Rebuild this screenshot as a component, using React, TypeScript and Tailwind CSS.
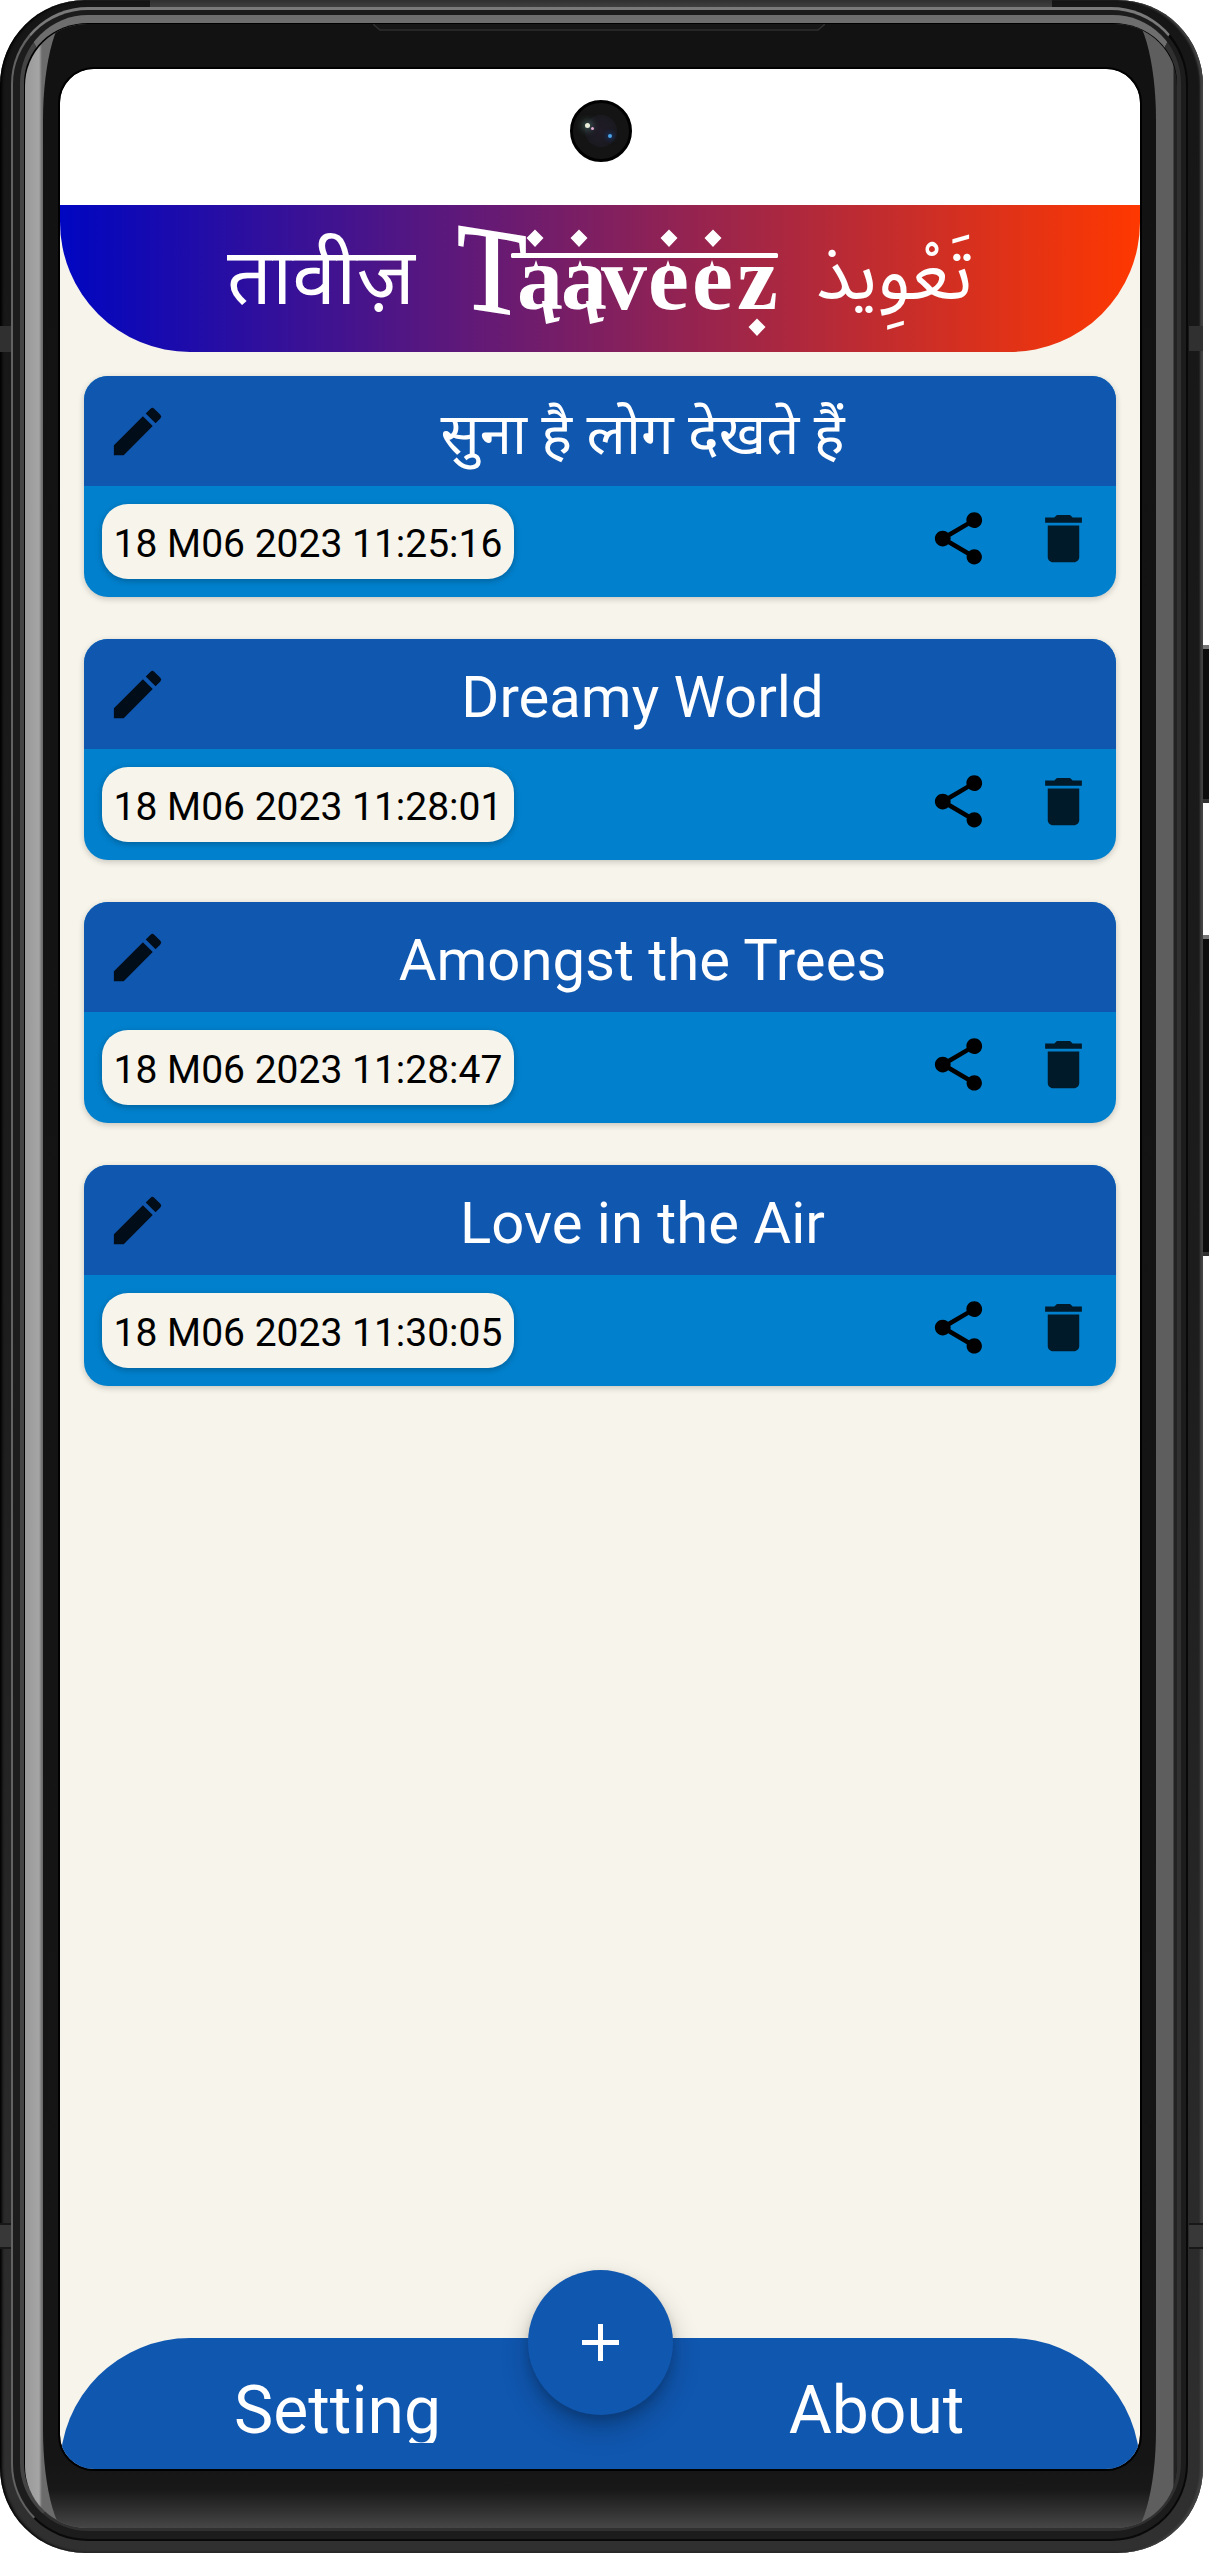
import { MdDelete, MdEdit, MdShare } from "react-icons/md";

const notes = [
  { title: "सुना है लोग देखते हैं", date: "18 M06 2023 11:25:16" },
  { title: "Dreamy World", date: "18 M06 2023 11:28:01" },
  { title: "Amongst the Trees", date: "18 M06 2023 11:28:47" },
  { title: "Love in the Air", date: "18 M06 2023 11:30:05" },
];

function Wordmark() {
  return (
    <svg width="324" height="120" viewBox="456 222 324 120" fill="#fff" className="shrink-0 overflow-visible" fontFamily='"Liberation Serif", serif'>
      <text transform="translate(457 309) skewY(9)" x="0" y="0" fontSize="122" textLength="70" lengthAdjust="spacingAndGlyphs" stroke="#fff" strokeWidth="1.5">T</text>
      <text x="517 561 601 648 692 737" y="312" fontSize="92" fontWeight="700">aaveez</text>
      <rect x="511" y="256" width="267" height="5" rx="1.5" />
      {/* dots above and below the bar */}
      <path d="M535 232.500l8.500 8.500-8.500 9-8.500-9zM579 232.500l8.500 8.500-8.500 9-8.500-9zM669 232.500l8.500 8.500-8.500 9-8.500-9zM713 232.500l8.500 8.500-8.500 9-8.500-9zM757 321.500l8.500 8.500-8.500 9-8.500-9z" />
      {/* pointed caps */}
      <path d="M536 263l2 6 6 4h-16l6-4zM580 263l2 6 6 4h-16l6-4zM668 263l2 6 6 4h-16l6-4zM712 263l2 6 6 4h-16l6-4z" />
      {/* tails */}
      <path d="M542 304h9l3 17 6-1-1 4-13 3zM586 304h9l3 17 6-1-1 4-13 3z" />
    </svg>
  );
}

function Header() {
  return (
    <header className="flex h-[147px] shrink-0 items-center rounded-b-[130px] bg-[linear-gradient(90deg,#0006c1,#ff3800)] pl-[167px] text-white">
      <div className="w-[229px] -translate-y-[5px] whitespace-nowrap font-['Noto_Sans','Noto_Sans_Devanagari',sans-serif] text-[78.75px] leading-[98px]">तावीज़</div>
      <Wordmark />
      <div dir="rtl" className="ml-[38px] w-[155px] -translate-y-[3px] whitespace-nowrap text-right font-['Noto_Sans_Arabic','DejaVu_Sans',sans-serif] text-[74px] leading-[98px]">
        <span className="float-right">تَعْوِيذ</span>
      </div>
    </header>
  );
}

function NoteCard({ title, date }: { title: string; date: string }) {
  return (
    <article className="h-[221px] overflow-hidden rounded-[24px] bg-[#0080cd] shadow-[0_2px_6px_rgba(0,0,0,0.2)]">
      <div className="flex h-[110px] items-center bg-[#1057b0] pl-[22px]">
        <MdEdit className="size-[63px] shrink-0 text-black/85" />
        <h2 className="flex-1 whitespace-nowrap pt-[5px] text-center text-[58px] leading-[80px] text-white">{title}</h2>
      </div>
      <div className="flex h-[111px] items-center pr-[21px] pl-[18px]">
        <time className="flex h-[75px] w-[412px] items-center justify-center rounded-[26px] bg-[#f7f4eb] pt-[5px] text-[39px] whitespace-nowrap text-black shadow-[0_2px_6px_rgba(0,0,0,0.25)]">{date}</time>
        <MdShare className="ml-auto size-[63px] -translate-y-[3px] text-black" />
        <MdDelete className="ml-[42px] size-[63px] -translate-y-[3px] text-black/80" />
      </div>
    </article>
  );
}

function Footer() {
  return (
    <footer className="relative flex h-[131px] shrink-0 rounded-t-[130px] bg-[#1057b0] text-[66px] text-white">
      <div className="flex h-[105px] flex-1 justify-center overflow-hidden pt-[34px] pl-[14px] leading-[77px]">Setting</div>
      <div className="flex h-[105px] flex-1 justify-center pt-[34px] pl-[12px] leading-[77px]">About</div>
      <button className="absolute -top-[68px] left-[468px] flex size-[145px] items-center justify-center rounded-full bg-[#1057b0] shadow-[0_14px_28px_rgba(0,0,0,0.24),0_5px_10px_rgba(0,0,0,0.14)]" aria-label="Add">
        <svg width="37" height="37" viewBox="0 0 37 37" fill="#fff"><path d="M16 0h5v16h16v5H21v16h-5V21H0v-5h16z" /></svg>
      </button>
    </footer>
  );
}

function Camera() {
  return (
    <div className="flex size-[62px] items-center justify-center rounded-full border-[3px] border-black bg-[#141414]">
      <div className="relative size-[32px] rounded-full bg-radial from-[#211c28] to-[#17181c]">
        <i className="absolute top-[8px] left-0 size-[5px] rounded-full bg-[#e8f0dc] shadow-[0_0_6px_3px_rgba(90,140,130,0.5)]" />
        <i className="absolute top-[12px] left-[6px] size-[3px] rounded-full bg-[#e0a8d0]" />
        <i className="absolute top-[19px] left-[23px] size-[4px] rounded-full bg-[#4aa2e4] shadow-[0_0_4px_2px_rgba(20,60,120,0.6)]" />
      </div>
    </div>
  );
}

function Screen() {
  return (
    <div className="relative z-10 flex h-[2400px] w-[1080px] flex-col overflow-hidden rounded-[34px] bg-[#f7f4eb] outline-2 outline-black">
      <div className="flex h-[136px] shrink-0 justify-center bg-white pt-[31px] pl-[2px]"><Camera /></div>
      <Header />
      <main className="flex flex-1 flex-col gap-[42px] px-[24px] pt-[24px]">
        {notes.map((n) => <NoteCard key={n.date} {...n} />)}
      </main>
      <Footer />
    </div>
  );
}

export default function App() {
  return (
    <div className="relative h-[2553px] w-[1209px] overflow-hidden bg-white font-[Roboto,'Noto_Sans',sans-serif]">
      {/* side buttons */}
      <i className="absolute top-[645px] left-[1200px] h-[158px] w-[9px] border-y-4 border-t-[#777] border-b-[#333] bg-[#0d0d0d]" />
      <i className="absolute top-[935px] left-[1200px] h-[321px] w-[9px] border-y-4 border-t-[#777] border-b-[#333] bg-[#0d0d0d]" />
      <div className="relative h-[2553px] w-[1203px] overflow-hidden rounded-[85px] bg-linear-to-b from-[#161616] via-[#1c1c1c] to-[#303030] pt-[7px] pl-[11px] shadow-[inset_-3px_0_2px_#414141,inset_2px_0_3px_#000]">
        {/* antenna bands */}
        <i className="absolute top-0 left-[150px] h-[8px] w-[902px] bg-linear-to-b from-[#303030] to-[#424242]" />
        <i className="absolute top-[326px] left-0 h-[26px] w-[11px] bg-[#303030]" />
        <i className="absolute top-[326px] left-[1189px] h-[25px] w-[14px] bg-[#303030]" />
        <i className="absolute top-[2223px] left-0 h-[26px] w-[11px] border-y-2 border-[#181818] bg-[#383838]" />
        <i className="absolute top-[2223px] left-[1189px] h-[26px] w-[14px] border-y-2 border-[#181818] bg-[#383838]" />
        <div className="relative h-[2534px] w-[1177px] rounded-[77px] border-t-[3px] border-r-2 border-b-2 border-l-2 border-t-[#7a7a7a] border-r-[#080808] border-b-[#090909] border-l-[#626262] bg-[#1c1c1c] pt-[5px] pl-[7px]">
          <div className="h-[2516px] w-[1161px] rounded-[68px] border-t-[8px] border-r-[4px] border-b-[3px] border-l-[4px] border-t-[#6e6e6e] border-r-[#303030] border-b-[#303030] border-l-[#444] bg-black pt-px pl-px">
            <div className="relative h-[2504px] w-[1152px] overflow-hidden rounded-[62px] bg-[linear-gradient(90deg,#999_0,#a5a5a5_14px,#6c6c6c_17px,#5e5e5e_50%,#5e5e5e_1148px,#222_1149px)] pt-[45px] pl-[35px]">
              <i className="absolute -top-[14px] left-[18px] h-[2530px] w-[1113px] rounded-[32px/110px] bg-[linear-gradient(180deg,#121212_0,#151515_2450px,#181818_2480px,#464646_2518px)]" />
              {/* earpiece */}
              <svg className="absolute top-0 left-[348px]" width="452" height="8" viewBox="0 0 452 8"><path d="M0 0l7 6h438l7-6" fill="#161616" stroke="#2e2e2e" strokeWidth="1.500" /></svg>
              <Screen />
            </div>
          </div>
        </div>
      </div>
    </div>
  );
}
